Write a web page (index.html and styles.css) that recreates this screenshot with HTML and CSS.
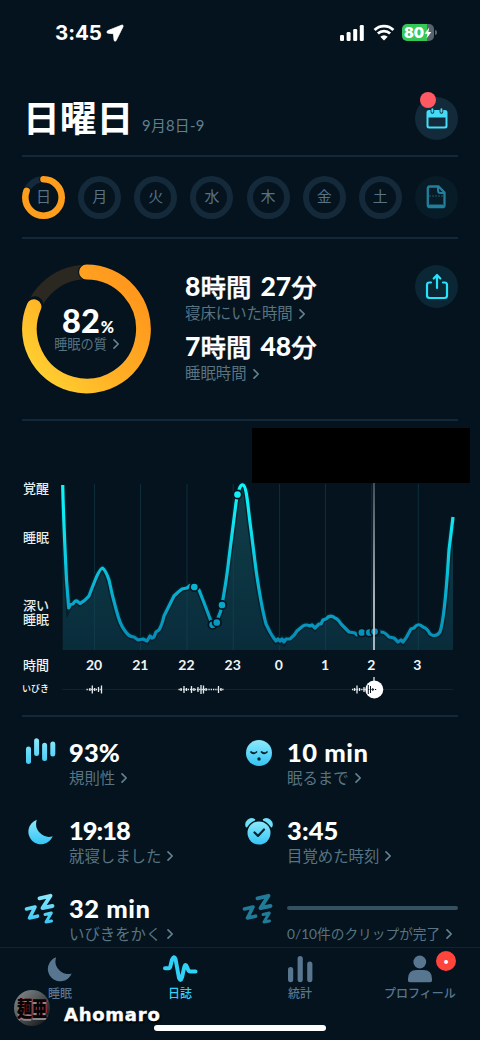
FILE: index.html
```html
<!DOCTYPE html>
<html lang="ja">
<head>
<meta charset="utf-8">
<title>日誌</title>
<link rel="stylesheet" href="styles.css">
</head>
<body>
<svg class="defs" width="0" height="0" aria-hidden="true">
  <defs>
    <linearGradient id="ice" x1="0" y1="0" x2="0" y2="1"><stop offset="0" stop-color="#8ce8fb"/><stop offset="1" stop-color="#35c5f5"/></linearGradient>
    <linearGradient id="iceUser" gradientUnits="userSpaceOnUse" x1="0" y1="2" x2="0" y2="32"><stop offset="0" stop-color="#8ce8fb"/><stop offset="1" stop-color="#35c5f5"/></linearGradient>
    <symbol id="chev" viewBox="0 0 8 12"><path d="M2 1.8 6.2 6 2 10.2" fill="none" stroke="currentColor" stroke-width="1.7" stroke-linecap="round" stroke-linejoin="round"/></symbol>
    <symbol id="moon" viewBox="0 0 26 26"><path d="M9.3.8A12.6 12.6 0 1 0 25.2 17.3 13 13 0 0 1 9.3.8Z"/></symbol>
    <symbol id="zzz" viewBox="0 0 32 32"><g fill="none" stroke-linecap="round" stroke-linejoin="round"><path stroke-width="3.9" d="M15.5 6.3 26.5 3.800 18.5 16 28.500 14"/><path stroke-width="3.600" d="M2.500 17 11 15 5.500 26 13.500 24.200"/><path stroke-width="3" d="M21 22.500 27.300 21 22 30 27.500 29"/></g></symbol>
  </defs>
</svg>
<main class="phone">
  <header class="status">
    <span class="clock">3:45</span>
    <svg class="nav" width="18" height="18" viewBox="0 0 18 18"><path d="M15.500 1.200 2 6.600C.5 7.400.5 9 2 9.200l5.500.5.500 6c.2 2 1.800 1.900 2.400.3L17 2.700c.5-1.200-.4-2-1.500-1.500Z" fill="#fff" stroke="#fff" stroke-width=".8"/></svg>
    <svg class="signal" width="27" height="18" viewBox="0 0 27 18" fill="#fff"><rect x="1" y="11" width="4" height="6" rx="1.300"/><rect x="7.600" y="8" width="4" height="9" rx="1.300"/><rect x="14.200" y="5" width="4" height="12" rx="1.300"/><rect x="20.800" y="1" width="4" height="16" rx="1.300"/></svg>
    <svg class="wifi" width="22" height="17" viewBox="0 0 22 17"><path d="M1.600 6a13.300 13.300 0 0 1 18.800 0M4.900 9.600a8.700 8.700 0 0 1 12.200 0" fill="none" stroke="#fff" stroke-width="2.800"/><path d="M11 16.500 7.300 12.800a5.200 5.200 0 0 1 7.400 0Z" fill="#fff"/></svg>
    <div class="battery"><span>80</span><svg width="8" height="14" viewBox="0 0 9 14"><path d="M5.800.8.800 7.800h3l-.9 5.400 5.300-7.400H5Z" fill="#fff"/></svg></div><i class="cap"></i>
  </header>

  <section class="head">
    <h1>日曜日</h1><span class="date">9月8日-9</span>
    <div class="round cal">
      <svg width="22" height="21" viewBox="0 0 22 21"><path fill="#45dcf8" fill-rule="evenodd" d="M3 2h1.600v2a1.800 1.800 0 0 0 3.600 0V2h5.400v2a1.800 1.800 0 0 0 3.600 0V2H19q2.500 0 2.500 2.500V18q0 2.500-2.500 2.500H3Q.5 20.500.5 18V4.500Q.5 2 3 2ZM2.500 9.500V17.500q0 1 1 1h15q1 0 1-1v-8Z"/><path d="M6.400 1.200v2.600M15.400 1.200v2.600" stroke="#45dcf8" stroke-width="2" stroke-linecap="round"/></svg>
      <i class="dot"></i>
    </div>
  </section>

  <section class="days">
    <div class="day today">日<svg width="43" height="43" viewBox="0 0 43 43"><circle cx="21.500" cy="21.500" r="18.200" fill="none" stroke="#14293a" stroke-width="6.400"/><circle cx="21.500" cy="21.500" r="18.200" fill="none" stroke="#04131d" stroke-width="8.500" stroke-linecap="round" pathLength="100" stroke-dasharray="81 100" transform="rotate(-90 21.500 21.500)"/><circle cx="21.500" cy="21.500" r="18.200" fill="none" stroke="#ff9d1c" stroke-width="6.600" stroke-linecap="round" pathLength="100" stroke-dasharray="81 100" transform="rotate(-90 21.500 21.500)"/></svg></div>
    <div class="day">月</div><div class="day">火</div><div class="day">水</div><div class="day">木</div><div class="day">金</div><div class="day">土</div>
    <div class="round faint"><svg width="20" height="24" viewBox="0 0 20 24"><path d="M4 1.500h8.500l6 6V20q0 2.200-2.200 2.200H4Q1.800 22.200 1.800 20V3.700Q1.800 1.500 4 1.500Z" fill="none" stroke="#217f9d" stroke-width="2.300"/><path d="M12 2v3.500q0 2.500 2.500 2.500H18" fill="none" stroke="#217f9d" stroke-width="2"/><path d="M3 11h14" stroke="#1b5a70" stroke-width="1" stroke-dasharray="2 1"/><path d="M3 20.300h14" stroke="#217f9d" stroke-width="1.500"/></svg></div>
  </section>

  <section class="summary">
    <div class="quality">
      <svg class="ring" width="130" height="130" viewBox="0 0 130 130">
        <defs><linearGradient id="amber" gradientUnits="userSpaceOnUse" x1="105" y1="20" x2="0" y2="110"><stop offset="0" stop-color="#ff981d"/><stop offset=".5" stop-color="#ffb025"/><stop offset="1" stop-color="#ffd633"/></linearGradient></defs>
        <circle cx="64.500" cy="65" r="57" fill="none" stroke="#2b2721" stroke-width="14.500"/>
        <g fill="none" stroke-linecap="round" transform="rotate(-90 64.500 65)"><circle cx="64.500" cy="65" r="57" stroke="#04131d" stroke-width="17" pathLength="100" stroke-dasharray="82 100"/></g>
        <path d="M64.500 8A57 57 0 1 1 12 42.700" fill="none" stroke="url(#amber)" stroke-width="14.800" stroke-linecap="round"/>
      </svg>
      <div class="score"><b>82</b><small>%</small></div>
      <div class="label tiny">睡眠の質<svg class="chev"><use href="#chev"/></svg></div>
    </div>
    <div class="times">
      <div class="big"><b>8</b>時間<b class="gap">27</b>分</div>
      <div class="label">寝床にいた時間<svg class="chev"><use href="#chev"/></svg></div>
      <div class="big second"><b>7</b>時間<b class="gap">48</b>分</div>
      <div class="label">睡眠時間<svg class="chev"><use href="#chev"/></svg></div>
    </div>
    <div class="round share"><svg width="24" height="27" viewBox="0 0 24 27" fill="none" stroke="#27e2fb" stroke-width="2.200" stroke-linecap="round" stroke-linejoin="round"><path d="M6 9.500H4.500Q2 9.500 2 12v10.500Q2 25 4.500 25h15q2.500 0 2.500-2.500V12q0-2.500-2.500-2.500H18M12 15V2.500M8.700 5.500 12 2l3.300 3.500"/></svg></div>
  </section>

  <section class="chart">
    <div class="ylabels"><span>覚醒</span><span class="y2">睡眠</span><span class="y3">深い</span><span>睡眠</span></div>
    <svg class="plot" width="394" height="170" viewBox="61 482 394 170">
      <defs>
        <linearGradient id="line" gradientUnits="userSpaceOnUse" x1="0" y1="484" x2="0" y2="642"><stop offset="0" stop-color="#0ff6fb"/><stop offset=".3" stop-color="#0ee1ee"/><stop offset=".7" stop-color="#08adcd"/><stop offset="1" stop-color="#078bb5"/></linearGradient>
        <linearGradient id="area" gradientUnits="userSpaceOnUse" x1="0" y1="484" x2="0" y2="650"><stop offset="0" stop-color="#103e49"/><stop offset="1" stop-color="#092c3b"/></linearGradient>
        <linearGradient id="cursor" gradientUnits="userSpaceOnUse" x1="0" y1="482" x2="0" y2="600"><stop offset="0" stop-color="#4a565d"/><stop offset="1" stop-color="#bfc3ca"/></linearGradient>
        <path id="curve" d="M62.700 485C63.300 515 65 550 66.500 580L68.700 608 70.500 604.500 73 604Q75 600.500 77 601L80 603.500Q85 601 89 596 92 588 96 578 100.500 568 102.500 568 105.500 570 109 580 112 595 116 609 120 625 125 631 129 637 134 637L138 640 143 639 147 641 150 636 152 638 154 637 156 632 159 630Q162 625 164 616L174 596Q178 592 182 589L187 588 190 585.500 194 587 199 590Q203 600 206 608L212 624Q216 625 218 618 221 612 222 605 227 577 229 558L236 503Q239 484 243 485C247 486 248 510 251 530L256 570Q261 605 266 624L270 632 273 637 276 641 278 639 280 641 282 639 284 642 286 639 290 639Q295 635 297 631L303 626Q306 624 310 626L312 625 315 628 319 624 321 624 323 620 326 619Q330 614 335 618 338 619 341 624L349 632 355 633 357 635 362 633 376 631 381 632Q385 632 389 637L394 638 398 642 401 640 403 642 406 638 411 629 414 628Q418 622 423 627 427 628 430 634 436 638 440 632C445 618 447 580 449 550L453 517"/>
      </defs>
      <path d="M62.700 650V485L66.500 580 68.700 608 77 601 80 603.500Q85 601 89 596L96 578Q101 567 103 568 106 570 109 580L116 609Q120 625 125 631L134 637 147 641 159 630Q162 625 174 596L182 589 194 587 199 590 212 624Q218 620 222 605L229 558 236 503Q239 484 243 485C247 486 248 510 251 530L256 570Q261 605 266 624L276 641H286L303 626 315 628 330 616 341 624 349 632 381 632 394 638 403 642 411 629Q418 622 430 634 436 638 440 632C445 618 447 580 449 550L453 517V650Z" fill="url(#area)"/>
      <path d="M94.500 484V650M140.500 484V650M187 484V650M233.300 484V650M279.500 484V650M325.500 484V650M371.800 484V650M418.300 484V650" stroke="#164858" stroke-opacity=".48" stroke-width="1.200"/>
      <use href="#curve" fill="none" stroke="#06202c" stroke-width="6"/>
      <use href="#curve" fill="none" stroke="url(#line)" stroke-width="3.200" stroke-linejoin="round"/>
      <path d="M357.500 633h23" stroke="#072735" stroke-width="8"/>
      <g fill="url(#line)" stroke="#04131d" stroke-width="1.700"><circle cx="194.300" cy="587" r="4.200"/><circle cx="212.600" cy="624.800" r="4.200"/><circle cx="216.800" cy="622.500" r="4.200"/><circle cx="222" cy="605" r="4.200"/><circle cx="237.500" cy="494.500" r="4.200"/><circle cx="361.800" cy="632.500" r="4.200"/><circle cx="369.300" cy="632.500" r="4.200"/><circle cx="374.600" cy="631.500" r="4.200"/></g>
      <path d="M374 482V650" stroke="url(#cursor)" stroke-width="1.800"/>
    </svg>
    <div class="hours"><span class="cap1">時間</span><b>20</b><b>21</b><b>22</b><b>23</b><b>0</b><b>1</b><b>2</b><b>3</b></div>
    <div class="snore"><span>いびき</span>
      <svg width="394" height="24" viewBox="61 677 394 24"><path d="M62 689.500H453" stroke="#0c2532"/><g stroke="#e5ebee" stroke-width="1.300"><path d="M86.500 689.500h16" stroke-dasharray="1.300 1"/><path d="M90 688v3M92.300 685.500v8M94.700 688v3M98.500 687v5M101.500 685.500v8"/><path d="M178.500 689.500h46" stroke-dasharray="1.300 1"/><path d="M181 688v3M184 686v7M186.500 688v3M191.500 686v7M194 688v3M198 687v5M201 685v9M203.500 685.500v8M206 688v3M218.500 686v7M221 688v3"/><path d="M352 689.500h14" stroke-dasharray="1.300 1"/><path d="M354.500 688v3M357 685.500v8M359.500 688v3M364 687v5"/></g><path d="M374 677v5" stroke="#c7ced2" stroke-width="1.500"/><circle cx="374.300" cy="689.500" r="9" fill="#fff"/><path d="M368 689.500h9" stroke="#07131b" stroke-width="1" stroke-dasharray="1.300 1"/><path d="M368.300 685v9M370.500 686v7M372.800 688v3" stroke="#07131b" stroke-width="1"/></svg>
    </div>
    <div class="cover"></div>
  </section>

  <section class="stats">
    <article><svg class="ico" width="34" height="32" viewBox="0 0 34 32"><g stroke="url(#iceUser)" stroke-width="5" stroke-linecap="round"><path d="M6.500 12v12.500M14.600 3.800 14.610 16.500M22.600 8.300v13.200M30.800 7 30.810 17"/></g></svg><div><h2>93%</h2><p class="label">規則性<svg class="chev"><use href="#chev"/></svg></p></div></article>
    <article><svg class="ico face" width="34" height="32" viewBox="0 0 34 32"><circle cx="19" cy="16" r="13" fill="url(#ice)"/><g fill="none" stroke="#052533" stroke-width="1.700" stroke-linecap="round"><path d="M11 15q2.800 2.500 5.500 0M21.500 15q2.800 2.500 5.500 0"/></g><circle cx="19" cy="22" r="1.700" fill="#052533"/></svg><div><h2 class="wide">10 min</h2><p class="label">眠るまで<svg class="chev"><use href="#chev"/></svg></p></div></article>
    <article><svg class="ico" width="34" height="32" viewBox="0 0 34 32"><use href="#moon" x="5.500" y="4" width="26" height="26" fill="url(#ice)"/></svg><div><h2 class="tight">19:18</h2><p class="label">就寝しました<svg class="chev"><use href="#chev"/></svg></p></div></article>
    <article><svg class="ico face" width="34" height="32" viewBox="0 0 34 32"><circle cx="19" cy="18" r="11.500" fill="url(#ice)"/><path d="M6.500 11.500A5.500 5.500 0 0 1 14.300 4.800Q9.500 6.500 6.500 11.500ZM31.500 11.500A5.500 5.500 0 0 0 23.700 4.800Q28.500 6.500 31.500 11.500Z" fill="#6ee0fa" stroke="#6ee0fa" stroke-width="1.800" stroke-linejoin="round"/><path d="m14.500 17.500 3.500 3.400 6-6.400" fill="none" stroke="#052533" stroke-width="2.200" stroke-linecap="round" stroke-linejoin="round"/></svg><div><h2>3:45</h2><p class="label">目覚めた時刻<svg class="chev"><use href="#chev"/></svg></p></div></article>
    <article><svg class="ico zzz" width="34" height="32" viewBox="0 0 34 32"><use href="#zzz" x="2" y="0" width="32" height="32" stroke="url(#iceUser)"/></svg><div><h2 class="wide">32 min</h2><p class="label">いびきをかく<svg class="chev"><use href="#chev"/></svg></p></div></article>
    <article><svg class="ico zzz" width="34" height="32" viewBox="0 0 34 32"><use href="#zzz" x="2" y="0" width="32" height="32" stroke="#207b99"/></svg><div class="clips"><div class="bar"></div><p class="label">0/10件のクリップが完了<svg class="chev"><use href="#chev"/></svg></p></div></article>
  </section>

  <nav class="tabs">
    <a><svg width="36" height="28" viewBox="0 0 36 28"><use href="#moon" x="5" y="1.500" width="25.500" height="25.500" fill="#587690"/></svg>睡眠</a>
    <a class="on"><svg width="36" height="28" viewBox="0 0 36 28"><path d="M3 13.300h3.500q1.500 0 2-2.500l1.500-6Q12 0 13.500 4L17 23q1.700 4 3-.5l2.300-10.500q1.200-4 2.700 0l1 2.500q.8 2 2.500 2H33.500" fill="none" stroke="#30d0f7" stroke-width="4" stroke-linecap="round" stroke-linejoin="round"/></svg>日誌</a>
    <a><svg width="36" height="28" viewBox="0 0 36 28" fill="#587690"><rect x="6" y="12" width="5.200" height="15.200" rx="2.600"/><rect x="15.600" y="1" width="5.200" height="26.200" rx="2.600"/><rect x="25.200" y="6.500" width="5.200" height="20.700" rx="2.600"/></svg>統計</a>
    <a><svg width="36" height="28" viewBox="0 0 36 28" fill="#587690"><circle cx="17.800" cy="7" r="6.400"/><path d="M6 25.500v-1.500Q6 15 14.500 15h7Q30 15 30 24v1.500q0 1.700-1.700 1.700H7.700Q6 27.200 6 25.500Z"/></svg>プロフィール<i class="badge">•</i></a>
  </nav>
  <div class="owner"><div class="avatar"><span>麺</span><span>亜</span></div><strong>Ahomaro</strong></div>
  <div class="home"></div>
</main>
</body>
</html>
```
FILE: styles.css
```css
* { box-sizing: border-box; }
body, h1, h2, p { margin: 0; }
body { background: #04131d; color: #fff; font-family: Lato, "Noto Sans CJK JP", sans-serif; }
svg { display: block; flex: none; }
.defs { position: absolute; }
.phone { position: relative; width: 480px; height: 1040px; overflow: hidden; background: #04131d; }
.status { display: flex; align-items: center; height: 65px; padding-left: 55px; }
.clock { width: 49px; font: 700 20.500px/26px Inter, sans-serif; letter-spacing: -.1px; }
.nav { margin-left: 2px; }
.signal { margin-left: 215px; }
.wifi { margin-left: 7px; }
.battery { display: flex; align-items: center; width: 32px; height: 17px; margin-left: 7px; padding-left: 2px; border-radius: 5px; background: linear-gradient(90deg, #34c759 78%, #59636a 78%); font: 900 14.500px/17px Inter, sans-serif; }
.cap { width: 2px; height: 5px; margin-left: 1px; border-radius: 0 2px 2px 0; background: #59636a; }

.head, .days, .summary, .chart { margin: 0 22px; border-bottom: 2px solid #132838; }
.head { display: flex; height: 92px; }
h1 { width: 119px; margin-left: 1px; padding-top: 31px; font: 700 36.800px/40px "Noto Sans CJK JP", sans-serif; padding-top: 31px; white-space: nowrap; }
.date { padding-top: 47px; font-size: 14.800px; line-height: 26px; color: #607f90; letter-spacing: .3px; }
.round { display: grid; place-items: center; width: 43px; height: 43px; border-radius: 50%; background: #122a39; }
.cal { position: relative; margin: 32px 0 0 auto; }
.dot { position: absolute; left: 5px; top: -5px; width: 16px; height: 16px; border-radius: 50%; background: #ff5964; }

.days { display: flex; justify-content: space-between; align-items: center; height: 82px; }
.day { position: relative; display: grid; place-items: center; width: 43px; height: 43px; border: 6.500px solid #14293a; border-radius: 50%; font-size: 15px; line-height: 20px; color: #587383; padding-bottom: 3px; }
.today { border-color: transparent; }
.today svg { position: absolute; left: -6px; top: -6px; }
.faint { background: #081c28; }

.summary { display: flex; height: 182px; }
.quality { position: relative; width: 130px; height: 130px; margin-top: 25px; padding-top: 40px; text-align: center; }
.ring { position: absolute; left: 0; top: 0; }
.score { position: relative; height: 33px; line-height: 33px; padding-left: 2px; white-space: nowrap; }
.score b { font-size: 32.500px; font-weight: 900; }
.score small { font-size: 16px; font-weight: 900; margin-left: 1px; }
.label { display: flex; align-items: center; height: 20px; font-size: 15.400px; line-height: 20px; color: #587482; white-space: nowrap; }
.chev { width: 8px; height: 12px; margin-left: 5px; color: #64818f; }
.tiny { position: relative; justify-content: center; height: 16px; margin-top: -1px; font-size: 13.200px; line-height: 16px; }
.times { margin-left: 33px; padding-top: 30px; }
.big { display: flex; height: 34px; font: 500 25.500px/34px "Noto Sans CJK JP", sans-serif; -webkit-text-stroke: .4px #fff; }
.big b { font-family: Lato, sans-serif; font-weight: 900; font-size: 26.500px; -webkit-text-stroke: 0; }
.big .gap { margin-left: 9px; }
.second { margin-top: 6px; }
.times .label { height: 21px; line-height: 21px; }
.times .label + .second { margin-top: 5px; }
.share { margin: 26px 0 0 auto; background: #0b2735; }

.chart { position: relative; display: grid; grid-template-columns: 39px 394px; grid-template-rows: 170px 25px 24px; height: 296px; padding-top: 61px; }
.ylabels { display: flex; flex-direction: column; margin-top: -1px; padding-left: 1px; font: 500 13px/14px "Noto Sans CJK JP", sans-serif; color: #e8edef; }
.y2 { margin-top: 35px; }
.y3 { margin-top: 54px; }
.hours { grid-column: 1 / 3; display: grid; grid-template-columns: 49px repeat(8, 46.200px); align-items: center; font-size: 14px; color: #f0f3f4; }
.hours b { text-align: center; }
.cap1 { padding-left: 1px; font: 500 13px/20px "Noto Sans CJK JP", sans-serif; }
.snore { grid-column: 1 / 3; display: grid; grid-template-columns: 39px 394px; align-items: center; font: 500 9px/14px "Noto Sans CJK JP", sans-serif; }
.cover { position: absolute; left: 230px; top: 7px; width: 218px; height: 55px; background: #000; }

.stats { display: grid; grid-template-columns: 218px 218px; grid-template-rows: repeat(3, 78px); padding: 18px 22px 0; height: 230px; overflow: hidden; }
.stats article { display: flex; }
.ico { margin-right: 13px; margin-top: 2px; }
.ico.face { margin-right: 13px; }
.ico.zzz { margin-top: 1px; }
h2 { height: 32px; font-size: 25.500px; line-height: 34px; font-weight: 900; letter-spacing: .1px; white-space: nowrap; }
h2.wide { letter-spacing: .55px; }
h2.tight { letter-spacing: -1.200px; }
h2.tight { letter-spacing: -1px; }
.stats .label { height: 22px; }
.clips { width: 171px; }
.bar { height: 4px; margin: 15px 0 13px; border-radius: 2px; background: #34515f; }
.clips .label { font-size: 13.700px; }

.tabs { display: grid; grid-template-columns: repeat(4, 120px); height: 93px; border-top: 1px solid #11242f; background: #04131d; }
.tabs a { position: relative; display: flex; flex-direction: column; align-items: center; padding-top: 7px; font: 500 12px/20px "Noto Sans CJK JP", sans-serif; color: #587690; }
.tabs a.on { color: #30d0f7; }
.badge { position: absolute; left: 76px; top: 3px; width: 20px; height: 20px; border-radius: 50%; background: #ff443c; color: #fff; font: 700 12px/20px Inter, sans-serif; text-align: center; }
.owner { position: absolute; left: 14px; top: 990px; display: flex; align-items: center; }
.avatar { display: flex; align-items: center; justify-content: center; width: 36px; height: 36px; border-radius: 50%; background: linear-gradient(135deg, #8a8f91, #53585a 45%, #15191b 90%); overflow: hidden; }
.avatar span { font: 900 15px/32px "Noto Sans CJK JP", sans-serif; color: #050505; text-shadow: 1px 0 #b1253b, 0 1px #888; transform: scaleY(1.400); }
.owner strong { margin: 14px 0 0 14px; font: 700 18px/22px "DejaVu Sans", sans-serif; letter-spacing: .75px; -webkit-text-stroke: .4px #fff; text-shadow: 1px 2px 2px #000; }
.home { position: absolute; left: 154px; top: 1025px; width: 172px; height: 6px; border-radius: 3px; background: #fff; }
```
